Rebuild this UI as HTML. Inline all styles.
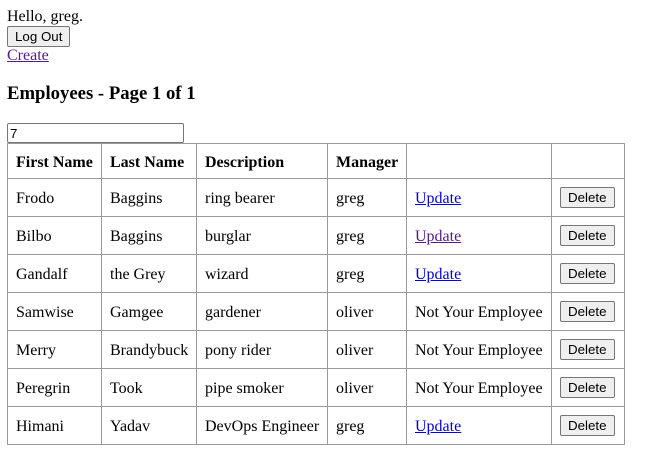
<!DOCTYPE html>
<html><head><style>
body{margin:8px 7px;font-family:"Liberation Serif",serif;font-size:16px;color:#000;background:#fff}
button{font-family:"Liberation Sans",Arial,sans-serif;font-size:13.33px;padding:1px 7px;border:1px solid #767676;border-radius:2px;background:#efefef;color:#000;height:21px}
td button{position:relative;top:-2px}
a{color:#00e}
a.v{color:#551a8b}
h3{font-size:18.72px;margin:18px 0 18px}
input{width:177px;height:20px;box-sizing:border-box;border:1px solid #767676;border-radius:2px;font-family:"Liberation Sans",Arial,sans-serif;font-size:13.33px;padding:1px 2px;margin:0;display:block}
table{border-collapse:collapse;table-layout:fixed;width:617px}
td,th{border:1px solid #999;padding:3px 8px 0;text-align:left;height:38px;box-sizing:border-box;white-space:nowrap}
th{height:35px}
</style></head><body>
<div>Hello, greg.</div>
<button>Log Out</button><br>
<a class="v" href="#">Create</a>
<h3>Employees - Page 1 of 1</h3>
<input value="7">
<table>
<colgroup><col style="width:94px"><col style="width:95px"><col style="width:131px"><col style="width:79px"><col style="width:145px"><col style="width:73px"></colgroup>
<tr><th>First Name</th><th>Last Name</th><th>Description</th><th>Manager</th><th></th><th></th></tr>
<tr><td>Frodo</td><td>Baggins</td><td>ring bearer</td><td>greg</td><td><a href="#">Update</a></td><td><button>Delete</button></td></tr>
<tr><td>Bilbo</td><td>Baggins</td><td>burglar</td><td>greg</td><td><a class="v" href="#">Update</a></td><td><button>Delete</button></td></tr>
<tr><td>Gandalf</td><td>the Grey</td><td>wizard</td><td>greg</td><td><a href="#">Update</a></td><td><button>Delete</button></td></tr>
<tr><td>Samwise</td><td>Gamgee</td><td>gardener</td><td>oliver</td><td>Not Your Employee</td><td><button>Delete</button></td></tr>
<tr><td>Merry</td><td>Brandybuck</td><td>pony rider</td><td>oliver</td><td>Not Your Employee</td><td><button>Delete</button></td></tr>
<tr><td>Peregrin</td><td>Took</td><td>pipe smoker</td><td>oliver</td><td>Not Your Employee</td><td><button>Delete</button></td></tr>
<tr><td>Himani</td><td>Yadav</td><td>DevOps Engineer</td><td>greg</td><td><a href="#">Update</a></td><td><button>Delete</button></td></tr>
</table>
</body></html>
